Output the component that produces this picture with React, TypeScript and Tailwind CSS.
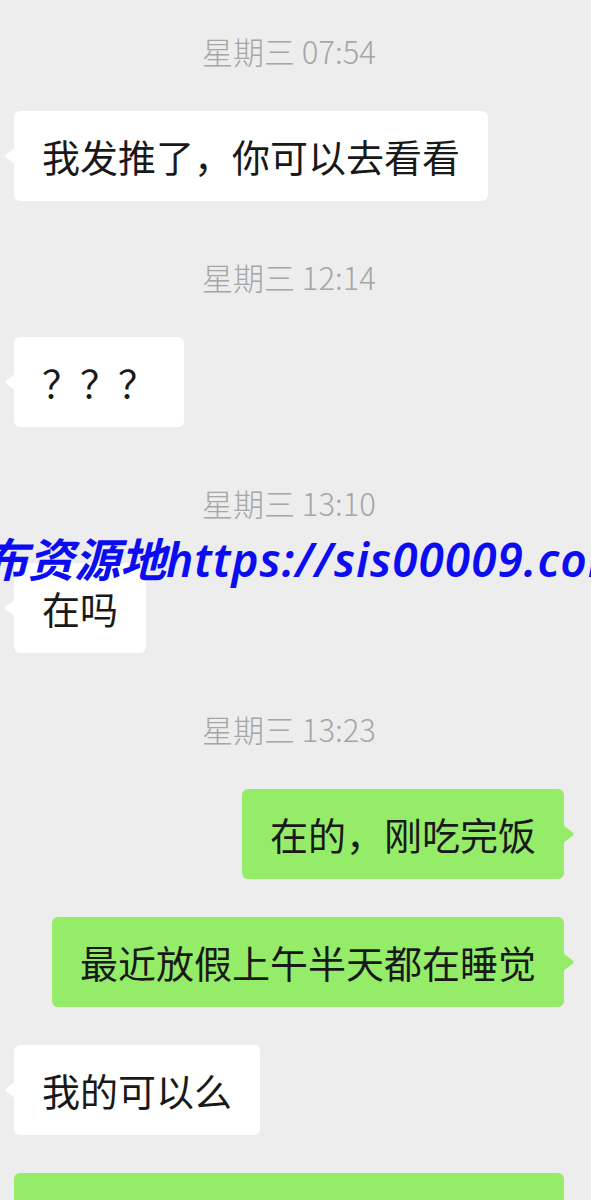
import React from 'react';

type Msg =
  | { kind: 'time'; text: string }
  | { kind: 'in'; text: string }
  | { kind: 'out'; text: string; width?: string };

const messages: Msg[] = [
  { kind: 'time', text: '星期三 07:54' },
  { kind: 'in', text: '我发推了，你可以去看看' },
  { kind: 'time', text: '星期三 12:14' },
  { kind: 'in', text: '？？？' },
  { kind: 'time', text: '星期三 13:10' },
  { kind: 'in', text: '在吗' },
  { kind: 'time', text: '星期三 13:23' },
  { kind: 'out', text: '在的，刚吃完饭' },
  { kind: 'out', text: '最近放假上午半天都在睡觉' },
  { kind: 'in', text: '我的可以么' },
  { kind: 'out', text: '', width: 'w-[554px]' },
];

const font = { fontFamily: '"Noto Sans CJK SC", "Noto Sans", sans-serif' };

function Tail({ side, color }: { side: 'left' | 'right'; color: string }) {
  return (
    <svg
      width="12"
      height="20"
      viewBox="0 0 12 20"
      className={`absolute top-1/2 -translate-y-1/2 ${side === 'left' ? 'left-[-10px]' : 'right-[-11px] scale-x-[-1]'}`}
    >
      <path d="M12 1 L2 8.6 Q0.6 10 2 11.4 L12 19 Z" fill={color} />
    </svg>
  );
}

function Bubble({ msg }: { msg: Msg }) {
  if (msg.kind === 'time') {
    return (
      <div className="flex justify-center">
        <span className="text-[31px] leading-[34px] font-light text-[#a6a6a6]">{msg.text}</span>
      </div>
    );
  }
  const incoming = msg.kind === 'in';
  return (
    <div className={`flex ${incoming ? 'justify-start' : 'justify-end'}`}>
      <div
        className={`relative h-[90px] flex items-center px-7 rounded-[6px] text-[38px] leading-none text-[#191919] ${
          incoming ? 'bg-white' : 'bg-[#95ec69]'
        } ${msg.kind === 'out' && msg.width ? msg.width : ''}`}
      >
        <Tail side={incoming ? 'left' : 'right'} color={incoming ? '#ffffff' : '#95ec69'} />
        <span className="whitespace-nowrap">{msg.text}</span>
      </div>
    </div>
  );
}

export default function App() {
  return (
    <div className="relative w-[591px] h-[1200px] overflow-hidden bg-[#ededed]" style={font}>
      <div className="flex flex-col pt-[34px] pl-[14px] pr-[27px]">
        {messages.map((m, i) => {
          const prev = messages[i - 1];
          let mt = '';
          if (i > 0) {
            if (m.kind === 'time') mt = 'mt-[59px]';
            else if (prev.kind === 'time') mt = 'mt-[43px]';
            else mt = 'mt-[38px]';
          }
          return (
            <div key={i} className={mt}>
              <Bubble msg={m} />
            </div>
          );
        })}
      </div>

      {/* watermark over the chat */}
      <div
        className="absolute left-[-18px] top-[536px] whitespace-nowrap text-[46px] leading-[46px] font-semibold italic text-[#0c0cf2]"
        style={{ fontFamily: '"Noto Sans", "Noto Sans CJK SC", sans-serif' }}
      >
        布资源地<span className="tracking-[1px]">https://sis00009.com</span>
      </div>
    </div>
  );
}
